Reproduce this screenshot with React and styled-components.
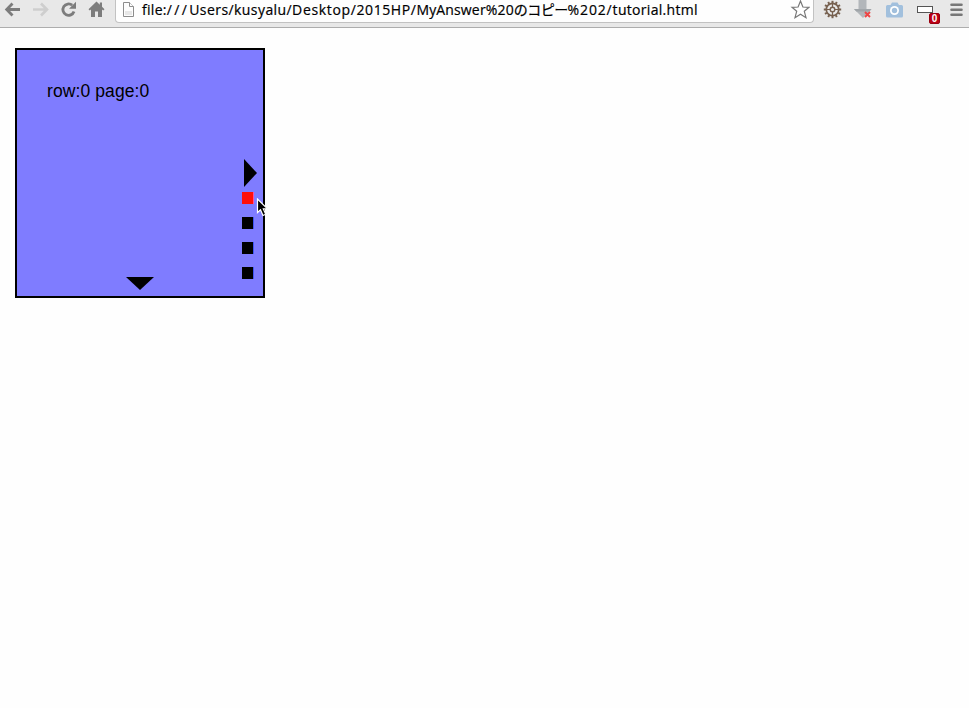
import React from "react";
import styled, { createGlobalStyle } from "styled-components";

const GlobalStyle = createGlobalStyle`
  * { box-sizing: border-box; }
  html, body { margin: 0; padding: 0; background: #fefefe; overflow: hidden; }
`;

const Page = styled.div`
  width: 969px;
  height: 708px;
  display: flex;
  flex-direction: column;
  background: #fefefe;
`;

const Toolbar = styled.header`
  flex: none;
  height: 28px;
  display: flex;
  align-items: flex-start;
  background: #e8e8e8;
  border-bottom: 1px solid #adadad;
`;

const Nav = styled.nav`
  display: flex;
  width: 115px;
  padding-left: 3px;
  gap: 8px;
`;

const Icon = styled.svg`
  display: block;
  flex: none;
  width: ${(p) => p.$w || 20}px;
  height: ${(p) => p.$h || 24}px;
`;

const AddressBar = styled.div`
  display: flex;
  width: 699px;
  height: 23px;
  padding: 0 3px 0 5px;
  background: #fefefe;
  border: 1px solid #c2c2c2;
  border-top: 0;
  border-radius: 0 0 4px 4px;
`;

const Url = styled.div`
  flex: 1;
  display: flex;
  margin-left: 5px;
  white-space: nowrap;
  color: #000;
  font: 14px/20px "Open Sans", "Noto Sans CJK JP", sans-serif;
  -webkit-text-stroke: 0.2px #000;
`;

const UrlPart = styled.span`
  flex: none;
  letter-spacing: ${(p) => p.$ls}px;
`;

const Extensions = styled.div`
  display: flex;
  padding-left: 8px;
  gap: 11px;
`;

const BadgeHolder = styled.div`
  position: relative;
  width: 20px;
  margin: 0 0 0 2px;
`;

const Badge = styled.span`
  position: absolute;
  left: 12px;
  top: 13px;
  width: 11px;
  height: 11px;
  border-radius: 2px;
  border: 1px solid #990010;
  background: #bd0014;
  color: #fff;
  font: bold 10px/9px "Liberation Sans", sans-serif;
  text-align: center;
`;

const Card = styled.main`
  position: relative;
  width: 250px;
  height: 250px;
  margin: 20px 0 0 15px;
  border: 2px solid #000;
  background: #7f7cff;
  display: flex;
  flex-direction: column;
`;

const Label = styled.p`
  margin: 0;
  padding: 29px 0 0 30px;
  height: 109px;
  color: #000;
  font: 17.5px/24px "Liberation Sans", sans-serif;
  letter-spacing: ${(p) => p.$ls}px;
`;

const Pager = styled.div`
  align-self: flex-end;
  width: 21px;
  height: 118px;
  display: flex;
  flex-direction: column;
`;

const NextPage = styled.div`
  width: 0;
  height: 0;
  margin: 0 0 5px 2px;
  border: solid transparent;
  border-width: 14px 0 14px 13px;
  border-left-color: #000;
`;

const Dot = styled.div`
  width: 12px;
  height: 12px;
  margin-bottom: 13px;
  flex: none;
  background: ${(p) => (p.$active ? "#ff1008" : "#000")};
  border-right: 1px solid ${(p) => (p.$active ? "#ff4fa0" : "#3f55f5")};
`;

const NextRow = styled.div`
  width: 0;
  height: 0;
  margin-left: 109px;
  border: solid transparent;
  border-width: 13px 14px 0 14px;
  border-top-color: #000;
`;

const Cursor = styled.svg`
  position: absolute;
  left: 239px;
  top: 148px;
  width: 13px;
  height: 20px;
`;

const teeth = [0, 30, 60, 90, 120, 150, 180, 210, 240, 270, 300, 330];

const urlParts = [
  ["file:", 0.3],
  ["///", 2.3],
  ["Users/", 0.45],
  ["kusyalu/", 0.41],
  ["Desktop/", 0.66],
  ["2015HP/", 0.57],
  ["MyAnswer%20", 0.15],
  ["のコピー", -0.55],
  ["%202/", 0.85],
  ["tutorial.html", 0.3],
];

export default function App() {
  return (
    <Page>
      <GlobalStyle />
      <Toolbar>
        <Nav>
          <Icon viewBox="0 0 20 24" fill="none" stroke="#7c7c7c" strokeWidth="2.8">
            <path d="M17 9.5H4M9.5 3.5 3.7 9.5 9.5 15.5" />
          </Icon>
          <Icon viewBox="0 0 20 24" fill="none" stroke="#cecece" strokeWidth="2.6">
            <path d="M2 9.5H15.500M10 3.500 16 9.500 10 15.500" />
          </Icon>
          <Icon viewBox="0 0 20 24">
            <path d="M13.200 5.200A5.700 5.700 0 1 0 15 11.500" fill="none" stroke="#7c7c7c" strokeWidth="2.800" />
            <path d="M17 1.800V8.700H10Z" fill="#7c7c7c" />
          </Icon>
          <Icon viewBox="0 0 20 24" fill="#7c7c7c">
            <path d="M9.500 1.500 1.500 9.200 2.800 10.500 4 9.500V17H8V11.500H11V17H15V9.500L16.200 10.500 17.500 9.200 15 6.800V2.500H12.800V4.700Z" />
          </Icon>
        </Nav>
        <AddressBar>
          <Icon $w={16} viewBox="0 0 16 24" fill="#fdfdfd" stroke="#8d8d8d">
            <path d="M2.500 2.500H8.500L12.500 6.500V16.500H2.500Z" />
            <path d="M8.500 2.500V6.500H12.500" />
            <path d="M4 11H11V15H4Z" fill="#e7e7e7" stroke="none" />
          </Icon>
          <Url>
            {urlParts.map(([text, spacing]) => (
              <UrlPart key={text} $ls={spacing}>{text}</UrlPart>
            ))}
          </Url>
          <Icon viewBox="0 0 20 24" fill="#fff" stroke="#777" strokeWidth="1.2">
            <path d="M10.500 1 12.900 7 19 7.300 14.300 11.300 16 17.700 10.500 14.200 5 17.700 6.700 11.300 2 7.300 8.100 7Z" />
          </Icon>
        </AddressBar>
        <Extensions>
          <Icon viewBox="0 0 20 24" fill="none" stroke="#76604f">
            <circle cx="10.500" cy="9.500" r="6.200" strokeWidth="1.700" />
            <circle cx="10.500" cy="9.500" r="2.300" strokeWidth="1.400" />
            {teeth.map((a) => (
              <path key={a} d="M10.500 3V.8" strokeWidth="2" transform={`rotate(${a} 10.500 9.500)`} />
            ))}
            <path d="M10.500 4V7M10.500 12V15M5 9.500H8M13 9.500H16" strokeWidth="1.200" />
          </Icon>
          <Icon viewBox="0 0 20 24">
            <path d="M5.500 0H13.500V9H18.500L10 18 1 9H5.500Z" fill="#b2b6ba" />
            <path d="M1 9H18.500L16.500 11.500H3.300Z" fill="#a0a5a9" />
            <path d="M12 12 17 17M17 12 12 17" stroke="#ee4444" strokeWidth="1.900" />
          </Icon>
          <Icon viewBox="0 0 20 24">
            <path d="M3.500 5H6.500L8 2.500H13.500L15 5H17.500Q19 5 19 6.500V16Q19 17.500 17.500 17.500H3.500Q2 17.500 2 16V6.500Q2 5 3.500 5Z" fill="#a2c0dd" />
            <circle cx="10.500" cy="10.500" r="4.500" fill="#fff" />
            <circle cx="10.500" cy="10.500" r="2.700" fill="#a2c0dd" />
          </Icon>
          <BadgeHolder>
            <Icon viewBox="0 0 20 24" fill="#fff" stroke="#555">
              <rect x=".5" y="6.500" width="15" height="6" />
            </Icon>
            <Badge>0</Badge>
          </BadgeHolder>
          <Icon viewBox="0 0 20 24" stroke="#777" strokeWidth="2.600" strokeLinecap="round">
            <path d="M3.500 4.800H13.500M3.500 9.800H13.500M3.500 14.800H13.500" />
          </Icon>
        </Extensions>
      </Toolbar>
      <Card>
        <Label $ls={0.1}>row:0 page:0</Label>
        <Pager>
          <NextPage />
          <Dot $active />
          <Dot />
          <Dot />
          <Dot />
        </Pager>
        <NextRow />
        <Cursor viewBox="0 0 13 20">
          <path d="M1.500 1V14.500L4.500 11.700 7 17.500 9.700 16.300 7.300 10.800H11.500Z" fill="#000" stroke="#fff" strokeWidth="1.200" />
        </Cursor>
      </Card>
    </Page>
  );
}
